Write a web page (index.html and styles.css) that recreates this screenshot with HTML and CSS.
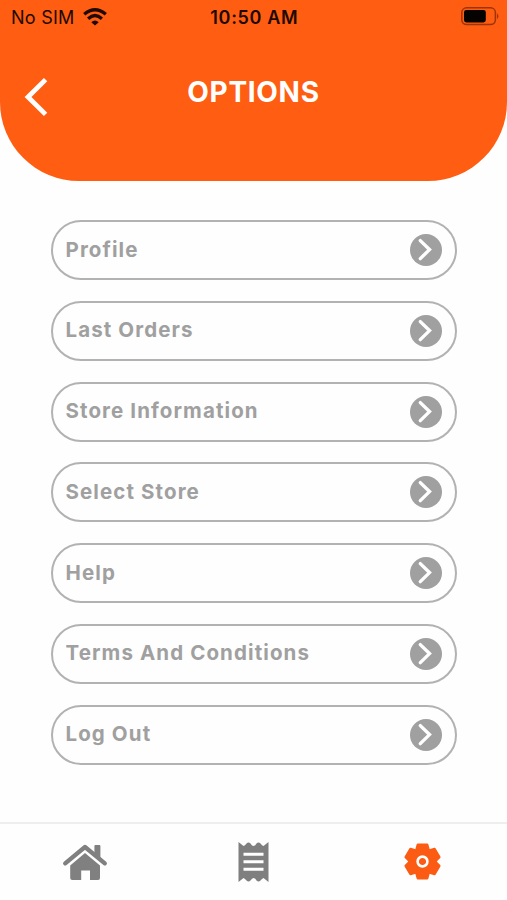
FILE: index.html
```html
<!DOCTYPE html>
<html lang="en">
<head>
<meta charset="utf-8">
<title>Options</title>
<link rel="stylesheet" href="styles.css">
</head>
<body>
<div class="screen">
  <header class="header">
    <div class="status">
      <div class="carrier"><span class="sim">No SIM</span>
        <svg class="wifi" width="24" height="18" viewBox="0 0 24 18" fill="none" stroke="#200a00" stroke-width="3.3"><path d="M1.2 6.3Q12 -2.7 22.8 6.3M5.1 10.7Q12 4.4 18.9 10.7"/><path d="M8.3 14.2Q12 10.6 15.7 14.2L12 17.6Z" fill="#200a00" stroke="none"/></svg>
      </div>
      <div class="time">10:50 AM</div>
      <svg class="battery" width="38" height="19" viewBox="0 0 38 19"><rect x=".8" y=".8" width="33.6" height="16.8" rx="4.8" fill="none" stroke="#9c3408" stroke-width="1.5"/><rect x="3" y="3" width="21.8" height="12.4" rx="2.3" fill="#050200"/><path d="M36 6.3Q38.7 9.2 36 12Z" fill="#9c3408"/></svg>
    </div>
    <div class="nav">
      <svg class="back" width="24" height="40" viewBox="0 0 24 40" fill="none" stroke="#fff" stroke-width="4.8"><path d="M21.6 2.6L4 20L21.6 37.400"/></svg>
      <h1 class="title">OPTIONS</h1>
    </div>
  </header>
  <main class="list">
    <div class="row"><span>Profile</span><svg class="go" viewBox="0 0 32 32"><circle cx="16" cy="16" r="16"/><path d="M10.3 6.6L19.5 15.6L10.3 24.6"/></svg></div>
    <div class="row"><span>Last Orders</span><svg class="go" viewBox="0 0 32 32"><circle cx="16" cy="16" r="16"/><path d="M10.3 6.6L19.5 15.6L10.3 24.6"/></svg></div>
    <div class="row"><span>Store Information</span><svg class="go" viewBox="0 0 32 32"><circle cx="16" cy="16" r="16"/><path d="M10.3 6.6L19.5 15.6L10.3 24.6"/></svg></div>
    <div class="row"><span>Select Store</span><svg class="go" viewBox="0 0 32 32"><circle cx="16" cy="16" r="16"/><path d="M10.3 6.6L19.5 15.6L10.3 24.6"/></svg></div>
    <div class="row"><span>Help</span><svg class="go" viewBox="0 0 32 32"><circle cx="16" cy="16" r="16"/><path d="M10.3 6.6L19.5 15.6L10.3 24.6"/></svg></div>
    <div class="row"><span>Terms And Conditions</span><svg class="go" viewBox="0 0 32 32"><circle cx="16" cy="16" r="16"/><path d="M10.3 6.6L19.5 15.6L10.3 24.6"/></svg></div>
    <div class="row"><span>Log Out</span><svg class="go" viewBox="0 0 32 32"><circle cx="16" cy="16" r="16"/><path d="M10.3 6.6L19.5 15.6L10.3 24.6"/></svg></div>
  </main>
  <footer class="tabs">
    <div class="tab"><svg width="46" height="40" viewBox="0 0 46 40" fill="#808080"><path d="M3.2 21.300L23 5L42.800 21.300" fill="none" stroke="#808080" stroke-width="4.3" stroke-linecap="round" stroke-linejoin="round"/><path d="M32.4 4q0-1 1-1h4q1 0 1 1v14l-6-5z"/><path d="M8.2 23.500L23 11L38 23.500V36q0 2-2 2H28V28.500H19.2V38H10.200q-2 0-2-2z"/></svg></div>
    <div class="tab"><svg width="32" height="42" viewBox="0 0 32 42"><path d="M.5 1L5.500 5Q7 4.500 8.500 2.500Q10.500 .5 12.500 2.500Q14 5 15.500 5Q17 5 18.500 2.500Q20.500 .5 22.500 2.500Q24 4.500 25.500 5L30.500 1V41L25.500 37Q24 37.500 22.500 39.500Q20.500 41.500 18.500 39.500Q17 37 15.500 37Q14 37 12.500 39.500Q10.500 41.500 8.500 39.500Q7 37.500 5.500 37L.5 41Z" fill="#7f7f7f"/><path d="M5.500 13.200h20M5.500 20.700h20M5.500 28.200h20" stroke="#fff" stroke-width="3"/></svg></div>
    <div class="tab"><svg width="40" height="40" viewBox="-19.500 -19.500 40 40"><g fill="#fb5b12" stroke="#fb5b12" stroke-width="2.500" stroke-linejoin="round"><circle r="12.600"/><path id="tooth" d="M-6.500 -10L-4.700 -16.700H4.700L6.500 -10V10L4.700 16.700H-4.700L-6.500 10Z"/><use href="#tooth" transform="rotate(60)"/><use href="#tooth" transform="rotate(120)"/></g><circle r="4.900" fill="none" stroke="#fff" stroke-width="2.600"/></svg></div>
  </footer>
</div>
</body>
</html>
```
FILE: styles.css
```css
* { box-sizing: border-box; }
body { margin: 0; background: #fefefe; font-family: Inter, sans-serif; }
svg { display: block; flex: none; }
.screen { width: 507px; height: 900px; display: flex; flex-direction: column; overflow: hidden; }
.header { height: 180.5px; flex: none; background: #ff5d11; border-radius: 0 0 79px 79px; }
.status { height: 34px; display: grid; grid-template-columns: 1fr auto 1fr; align-items: center; padding: 0 8px 0 11px; color: #200a00; }
.carrier { display: flex; align-items: center; gap: 8px; }
.sim { font-size: 18px; letter-spacing: .25px; }
.time { font-size: 18px; font-weight: 600; letter-spacing: .65px; transform: translateX(-.7px); }
.battery { justify-self: end; margin-top: -2px; }
.wifi { margin-top: -1px; }
.nav { display: grid; grid-template-columns: 24px 1fr 24px; padding: 39px 24px 0; }
.back { margin-top: 4px; }
.title { margin: 0; text-align: center; color: #fff; font-size: 28px; line-height: 38px; font-weight: 700; letter-spacing: .7px; }
.list { flex: 1; padding: 39.500px 50px 0 51px; display: flex; flex-direction: column; gap: 20.800px; }
.row { height: 60px; flex: none; border: 2px solid #b2b2b2; border-radius: 30px; display: flex; align-items: center; justify-content: space-between; padding: 0 13px 0 12.500px; color: #a0a0a0; font-size: 20.500px; line-height: 26px; font-weight: 650; letter-spacing: 1.100px; }
.row span { margin-top: -1px; }
.go { width: 32px; height: 32px; fill: #a0a0a0; }
.go path { fill: none; stroke: #fff; stroke-width: 3.400; stroke-linecap: round; }
.tabs { height: 78px; flex: none; border-top: 2px solid #eee; display: grid; grid-template-columns: repeat(3, 1fr); align-items: center; justify-items: center; }
```
